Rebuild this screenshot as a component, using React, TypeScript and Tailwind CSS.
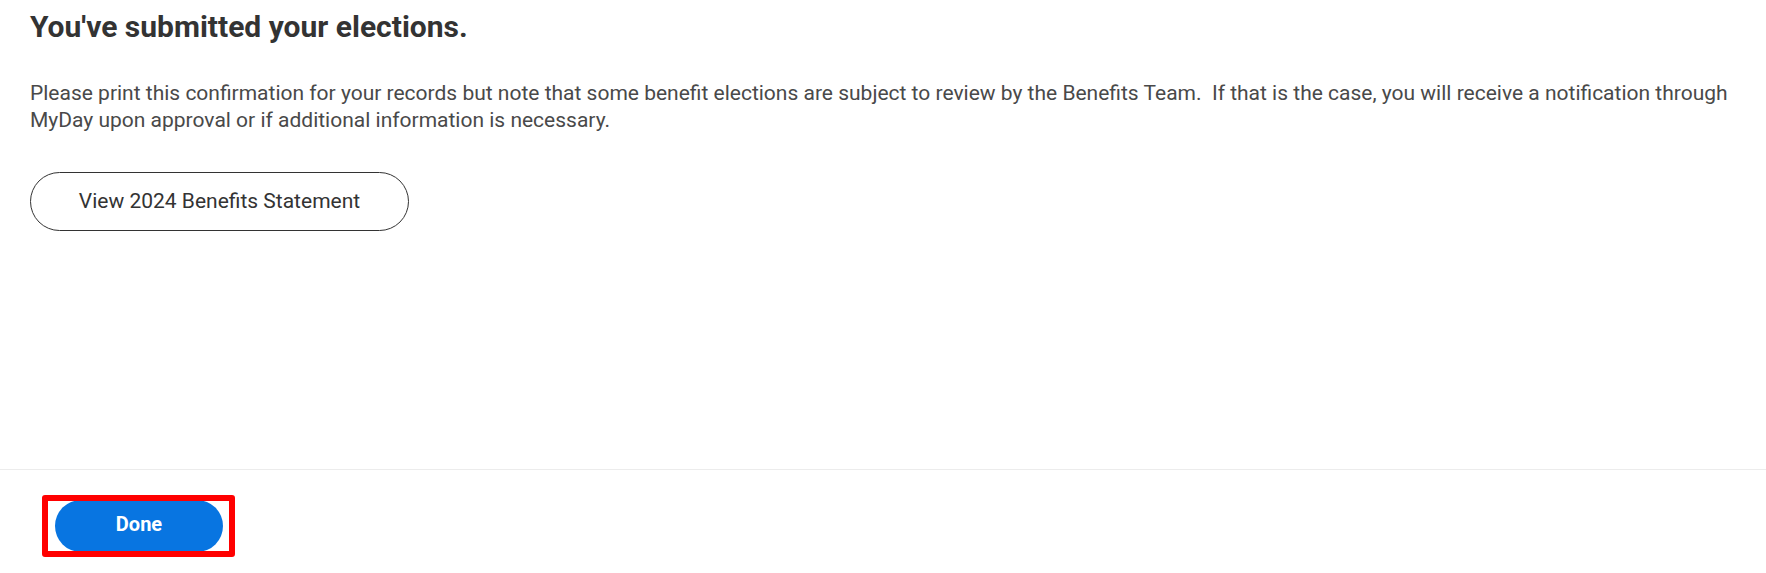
import React from "react";

const FONT = { fontFamily: "Roboto, 'Liberation Sans', sans-serif" };

function OutlineButton({ children }: { children: React.ReactNode }) {
  return (
    <button
      type="button"
      className="h-[59px] w-[379px] rounded-full border border-[#333333] bg-white text-[21px] font-normal text-[#333333]"
    >
      {children}
    </button>
  );
}

export default function App() {
  return (
    <div className="flex h-screen flex-col bg-white" style={FONT}>
      {/* confirmation body */}
      <div className="h-[469px] pl-[30px] pt-[9px] pr-[30px]">
        <h1 className="text-[30px] font-bold leading-[36px] text-[#333333]">
          You've submitted your elections.
        </h1>
        <p className="mt-[35px] text-[21px] leading-[27px] text-[#494949]">
          Please print this confirmation for your records but note that some benefit elections are subject to
          review by the Benefits Team.{"\u00a0 "}If that is the case, you will receive a notification through MyDay upon
          approval or if additional information is necessary.
        </p>
        <div className="mt-[38px]">
          <OutlineButton>View 2024 Benefits Statement</OutlineButton>
        </div>
      </div>

      {/* footer */}
      <div className="flex-1 border-t border-[#ececec] pl-[55px] pt-[30px]">
        <div className="relative inline-block">
          <button
            type="button"
            className="h-[52px] w-[168px] rounded-full bg-[#0875e1] pb-[4px] text-[20px] font-bold text-white"
          >
            Done
          </button>
          {/* highlight box */}
          <div className="pointer-events-none absolute left-[-13px] top-[-5px] h-[62px] w-[193px] rounded-[3px] border-[6px] border-[#ff0000]" />
        </div>
      </div>
    </div>
  );
}
